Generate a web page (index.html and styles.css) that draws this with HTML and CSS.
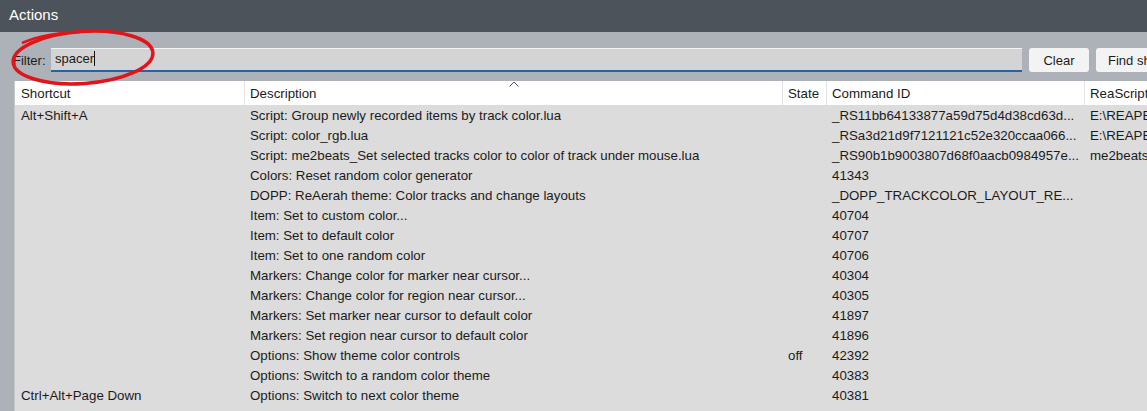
FILE: index.html
```html
<!DOCTYPE html>
<html>
<head>
<meta charset="utf-8">
<link rel="stylesheet" href="styles.css">
</head>
<body>
<div class="window">
  <div class="titlebar">Actions</div>
  <div class="filter-row">
    <label class="filter-label">Filter:</label>
    <div class="filter-input">spacer<span class="caret"></span></div>
    <button class="btn btn-clear">Clear</button>
    <button class="btn btn-find">Find shortcut...</button>
  </div>
  <div class="list">
    <div class="row header">
      <div class="c c1">Shortcut</div>
      <div class="c c2">Description<svg class="sort" width="10" height="6" viewBox="0 0 10 6"><polyline points="0.5,5.5 5,1 9.5,5.5" fill="none" stroke="#555" stroke-width="1"/></svg></div>
      <div class="c c3">State</div>
      <div class="c c4">Command ID</div>
      <div class="c c5">ReaScript path</div>
    </div>
    <div class="row"><div class="c c1">Alt+Shift+A</div><div class="c c2">Script: Group newly recorded items by track color.lua</div><div class="c c3"></div><div class="c c4">_RS11bb64133877a59d75d4d38cd63d...</div><div class="c c5">E:\REAPER\Scripts\</div></div>
    <div class="row"><div class="c c1"></div><div class="c c2">Script: color_rgb.lua</div><div class="c c3"></div><div class="c c4">_RSa3d21d9f7121121c52e320ccaa066...</div><div class="c c5">E:\REAPER\Scripts\</div></div>
    <div class="row"><div class="c c1"></div><div class="c c2">Script: me2beats_Set selected tracks color to color of track under mouse.lua</div><div class="c c3"></div><div class="c c4">_RS90b1b9003807d68f0aacb0984957e...</div><div class="c c5">me2beats\</div></div>
    <div class="row"><div class="c c1"></div><div class="c c2">Colors: Reset random color generator</div><div class="c c3"></div><div class="c c4">41343</div><div class="c c5"></div></div>
    <div class="row"><div class="c c1"></div><div class="c c2">DOPP: ReAerah theme: Color tracks and change layouts</div><div class="c c3"></div><div class="c c4">_DOPP_TRACKCOLOR_LAYOUT_RE...</div><div class="c c5"></div></div>
    <div class="row"><div class="c c1"></div><div class="c c2">Item: Set to custom color...</div><div class="c c3"></div><div class="c c4">40704</div><div class="c c5"></div></div>
    <div class="row"><div class="c c1"></div><div class="c c2">Item: Set to default color</div><div class="c c3"></div><div class="c c4">40707</div><div class="c c5"></div></div>
    <div class="row"><div class="c c1"></div><div class="c c2">Item: Set to one random color</div><div class="c c3"></div><div class="c c4">40706</div><div class="c c5"></div></div>
    <div class="row"><div class="c c1"></div><div class="c c2">Markers: Change color for marker near cursor...</div><div class="c c3"></div><div class="c c4">40304</div><div class="c c5"></div></div>
    <div class="row"><div class="c c1"></div><div class="c c2">Markers: Change color for region near cursor...</div><div class="c c3"></div><div class="c c4">40305</div><div class="c c5"></div></div>
    <div class="row"><div class="c c1"></div><div class="c c2">Markers: Set marker near cursor to default color</div><div class="c c3"></div><div class="c c4">41897</div><div class="c c5"></div></div>
    <div class="row"><div class="c c1"></div><div class="c c2">Markers: Set region near cursor to default color</div><div class="c c3"></div><div class="c c4">41896</div><div class="c c5"></div></div>
    <div class="row"><div class="c c1"></div><div class="c c2">Options: Show theme color controls</div><div class="c c3">off</div><div class="c c4">42392</div><div class="c c5"></div></div>
    <div class="row"><div class="c c1"></div><div class="c c2">Options: Switch to a random color theme</div><div class="c c3"></div><div class="c c4">40383</div><div class="c c5"></div></div>
    <div class="row"><div class="c c1">Ctrl+Alt+Page Down</div><div class="c c2">Options: Switch to next color theme</div><div class="c c3"></div><div class="c c4">40381</div><div class="c c5"></div></div>
    <div class="row"><div class="c c1">Ctrl+Alt+Page Up</div><div class="c c2">Options: Switch to previous color theme</div><div class="c c3"></div><div class="c c4">40382</div><div class="c c5"></div></div>
  </div>
  <svg class="annotation" width="170" height="70" viewBox="0 0 170 70">
    <ellipse cx="83" cy="28.5" rx="70" ry="26" transform="rotate(-4 83 28.5)" fill="none" stroke="#e0141a" stroke-width="3.5"/>
    <path d="M22 14 Q45 4 80 3" fill="none" stroke="#e0141a" stroke-width="2.5"/>
  </svg>
</div>
</body>
</html>
```

FILE: styles.css
```css
html, body {
  margin: 0;
  padding: 0;
}
body {
  width: 1147px;
  height: 411px;
  overflow: hidden;
  background: #adb1b8;
  font-family: "Liberation Sans", Arial, sans-serif;
  color: #1b1b1b;
}
.window {
  position: relative;
  width: 1147px;
  height: 411px;
}
.titlebar {
  height: 32px;
  background: #4c535b;
  color: #ffffff;
  font-size: 15px;
  line-height: 30px;
  padding-left: 9px;
}
.filter-row {
  display: flex;
  align-items: center;
  margin-top: 16px;
  height: 24px;
  white-space: nowrap;
}
.filter-label {
  font-size: 13px;
  margin-left: 13px;
  width: 38px;
  flex: none;
}
.filter-input {
  flex: none;
  box-sizing: border-box;
  width: 971px;
  height: 24px;
  background: #d4d4d4;
  border-top: 1px solid #f4f4f4;
  border-bottom: 2px solid #1f62ad;
  font-size: 13px;
  line-height: 20px;
  padding-left: 4px;
  color: #1b1b1b;
}
.caret {
  display: inline-block;
  width: 1px;
  height: 15px;
  background: #111;
  vertical-align: -3px;
}
.btn {
  flex: none;
  height: 24px;
  border: none;
  border-radius: 3px;
  background: #f3f3f3;
  font-family: "Liberation Sans", Arial, sans-serif;
  font-size: 13px;
  color: #1b1b1b;
  padding: 0;
}
.btn-clear {
  width: 60px;
  margin-left: 7px;
}
.btn-find {
  width: 110px;
  margin-left: 7px;
  text-align: left;
  padding-left: 12px;
}
.list {
  margin-top: 9px;
  margin-left: 14px;
  background: #dcdcdc;
  height: 330px;
  overflow: hidden;
  border-left: 1px solid #c8c8c8;
}
.row {
  display: grid;
  grid-template-columns: 229px 538px 44px 258px 200px;
  height: 20px;
  font-size: 13.3px;
  line-height: 21px;
  white-space: nowrap;
}
.row .c {
  height: 20px;
}
.row.header {
  height: 24px;
  line-height: 26px;
  background: #ffffff;
}
.row.header .c {
  height: 24px;
}
.c {
  padding-left: 6px;
  overflow: hidden;
  position: relative;
}
.header .c2, .header .c3, .header .c4, .header .c5 {
  border-left: 1px solid #e3e3e3;
  padding-left: 5px;
}
.sort {
  position: absolute;
  left: 264px;
  top: 0px;
}
.annotation {
  position: absolute;
  left: 0;
  top: 29px;
  pointer-events: none;
}
```
